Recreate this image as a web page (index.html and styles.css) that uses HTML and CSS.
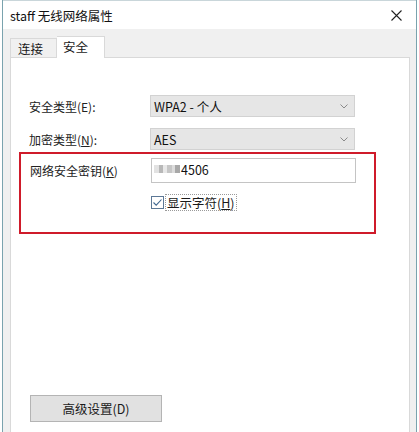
FILE: index.html
```html
<!DOCTYPE html>
<html lang="zh-CN">
<head>
    <meta charset="UTF-8">
    <title>staff 无线网络属性</title>
    <link rel="stylesheet" href="styles.css">
</head>
<body>
    <div class="window">
        <div class="titlebar">
            <span class="title">staff 无线网络属性</span>
            <svg class="close" width="11" height="11" viewBox="0 0 11 11">
                <path d="M0.5 0.5 L10.5 10.5 M10.5 0.5 L0.5 10.5" stroke="#222" stroke-width="1.1" fill="none"/>
            </svg>
        </div>

        <div class="client">
            <div class="tabs">
                <div class="tab">连接</div>
                <div class="tab active">安全</div>
            </div>

            <div class="panel">
                <div class="field-row">
                    <span class="label">安全类型(E):</span>
                    <div class="combo">
                        <span>WPA2 - 个人</span>
                        <svg class="arrow" width="8" height="5" viewBox="0 0 8 5"><path d="M0.5 0.5 L4 4 L7.5 0.5" stroke="#8a8a8a" fill="none"/></svg>
                    </div>
                </div>
                <div class="field-row">
                    <span class="label">加密类型(<u>N</u>):</span>
                    <div class="combo">
                        <span>AES</span>
                        <svg class="arrow" width="8" height="5" viewBox="0 0 8 5"><path d="M0.5 0.5 L4 4 L7.5 0.5" stroke="#8a8a8a" fill="none"/></svg>
                    </div>
                </div>

                <div class="key-box">
                    <div class="field-row key-row">
                        <span class="label">网络安全密钥(<u>K</u>)</span>
                        <div class="textbox">
                            <span class="mosaic"></span><span>4506</span>
                        </div>
                    </div>
                    <div class="check-row">
                        <svg class="checkbox" width="13" height="13" viewBox="0 0 13 13">
                            <rect x="0.5" y="0.5" width="12" height="12" fill="#fff" stroke="#5c7896"/>
                            <path d="M2.5 6.5 L5.2 9.2 L10.5 3.5" stroke="#3f6790" stroke-width="1.1" fill="none"/>
                        </svg>
                        <span class="check-label">显示字符(<u>H</u>)</span>
                    </div>
                </div>

                <button class="btn">高级设置(D)</button>
            </div>
        </div>
    </div>
</body>
</html>
```

FILE: styles.css
```css
body {
    margin: 0;
    overflow: hidden;
    background: #fff;
    font-family: "Noto Sans CJK SC", "Noto Sans", sans-serif;
    font-size: 12px;
    color: #1a1a1a;
}
.window {
    margin-left: 2px;
    width: 413px;
    height: 432px;
    overflow: hidden;
    border-left: 1px solid #7aa3ae;
    border-right: 1px solid #7aa3ae;
    background: #f0f0f0;
}
.titlebar {
    height: 29px;
    background: #fff;
    display: flex;
    align-items: center;
    justify-content: space-between;
    padding: 0 14px 0 7px;
    border-top: 1px solid #c9d6da;
    box-sizing: border-box;
}
.title {
    font-size: 12.5px;
    color: #111;
}
.client {
    padding: 7px 6px 0 7px;
}
.tabs {
    display: flex;
    align-items: flex-end;
    height: 22px;
    margin-bottom: -1px;
    position: relative;
}
.tab {
    width: 47px;
    height: 20px;
    padding-left: 7px;
    line-height: 19px;
    font-size: 12.5px;
    border: 1px solid #d9d9d9;
    border-bottom: none;
    box-sizing: border-box;
}
.tab.active {
    height: 22px;
    width: 48px;
    background: #fff;
    border-left: none;
    line-height: 20px;
    padding-left: 6px;
}
.panel {
    background: #fff;
    border: 1px solid #d9d9d9;
    height: 400px;
    padding: 37px 0 0 8px;
    box-sizing: border-box;
}
.field-row {
    display: grid;
    grid-template-columns: 121px 205px;
    align-items: center;
    margin-left: 10px;
    margin-bottom: 11px;
}
.label {
    color: #222;
}
.combo {
    height: 22px;
    box-sizing: border-box;
    background: #e6e6e6;
    border: 1px solid #d2d2d2;
    display: flex;
    align-items: center;
    justify-content: space-between;
    padding: 0 6px 0 3px;
    font-size: 12.5px;
    color: #111;
}
.key-box {
    width: 357px;
    box-sizing: border-box;
    border: 2px solid #cf1b2a;
    margin-top: -9px;
    padding: 4px 0 21px 0;
}
.key-row {
    margin-left: 9px;
    margin-bottom: 0;
    align-items: start;
}
.key-row .label {
    padding-top: 4px;
}
.textbox {
    height: 25px;
    box-sizing: border-box;
    border: 1px solid #c4c4c4;
    display: flex;
    align-items: center;
    padding: 0 0 3px 2px;
    font-size: 12.5px;
    color: #111;
}
/* pixelated blocks standing in for the hidden part of the key */
.mosaic {
    display: inline-block;
    width: 26px;
    height: 8px;
    margin-right: 1px;
    background:
        linear-gradient(90deg, #e2e2e2 0 5px, #b8b8b8 5px 9px, #e8e8e8 9px 13px, #c6c6c6 13px 18px, #dcdcdc 18px 21px, #a8a8a8 21px 26px);
    filter: blur(0.6px);
}
.check-row {
    display: flex;
    align-items: center;
    margin: 11px 0 0 130px;
}
.checkbox {
    display: block;
}
.check-label {
    margin-left: 1px;
    padding: 0 1px;
    border: 1px dotted #9a9a9a;
    line-height: 15px;
    font-size: 12.5px;
}
.btn {
    display: block;
    margin: 161px 0 0 11px;
    width: 132px;
    height: 27px;
    background: #e1e1e1;
    border: 1px solid #b4b4b4;
    font-family: inherit;
    font-size: 12.5px;
    color: #1a1a1a;
    padding: 0;
}
```
